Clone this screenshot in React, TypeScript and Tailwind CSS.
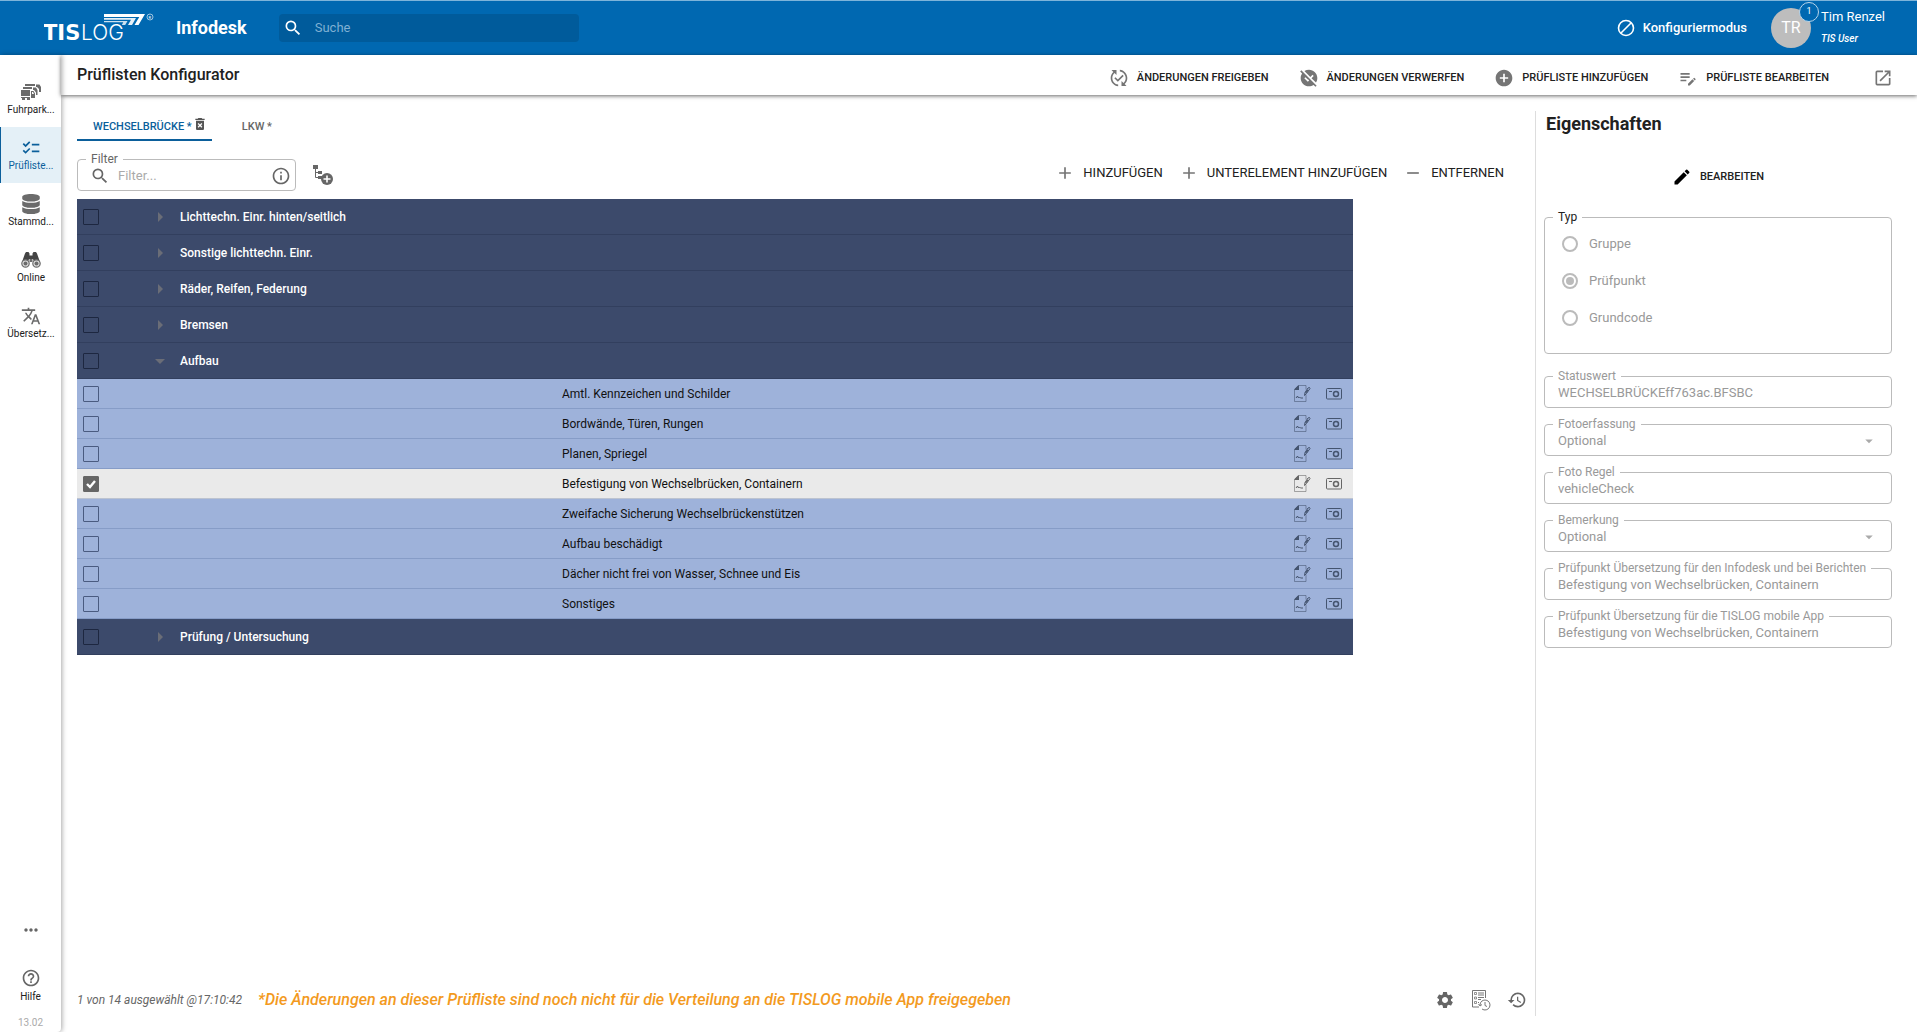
import { Fragment, useState } from 'react';
import clsx from 'clsx';
import {
  MdAdd,
  MdAddCircle,
  MdArrowDropDown,
  MdArrowRight,
  MdChecklist,
  MdDeleteForever,
  MdEdit,
  MdEditNote,
  MdHelpOutline,
  MdHistory,
  MdInfoOutline,
  MdMoreHoriz,
  MdOpenInNew,
  MdPublishedWithChanges,
  MdRemove,
  MdSearch,
  MdSettings,
  MdTranslate,
  MdUnpublished,
} from 'react-icons/md';
import { FaDatabase } from 'react-icons/fa';

const groups = [
  { name: 'Lichttechn. Einr. hinten/seitlich' },
  { name: 'Sonstige lichttechn. Einr.' },
  { name: 'Räder, Reifen, Federung' },
  { name: 'Bremsen' },
  {
    name: 'Aufbau',
    items: [
      'Amtl. Kennzeichen und Schilder',
      'Bordwände, Türen, Rungen',
      'Planen, Spriegel',
      'Befestigung von Wechselbrücken, Containern',
      'Zweifache Sicherung Wechselbrückenstützen',
      'Aufbau beschädigt',
      'Dächer nicht frei von Wasser, Schnee und Eis',
      'Sonstiges',
    ],
  },
  { name: 'Prüfung / Untersuchung' },
];

const Logo = () => (
  <svg width="112" height="32" viewBox="0 0 112 32" fill="#fff" role="img" aria-label="TISLOG">
    <text x="-1" y="28" fontFamily="DejaVu Sans, sans-serif" fontWeight="700" fontSize="21">TIS</text>
    <text x="37" y="28" fontFamily="Inter, sans-serif" fontWeight="300" fontSize="21">LOG</text>
    <path d="M60 2h41l-6.500 11h-4l4.800-8H60z" />
    <path d="M60 6h32l-4 7h-4l3-5.200H60z" opacity=".9" />
    <path d="M60 9h23.500l-2.300 4h-3.400l1.500-2.700H60z" opacity=".8" />
    <circle cx="106" cy="5" r="3" fill="none" stroke="#fff" strokeWidth=".6" />
    <text x="104.500" y="7" fontSize="4" fontFamily="Roboto, sans-serif">R</text>
  </svg>
);

const FleetIcon = () => (
  <svg width="20" height="20" viewBox="0 0 20 20" fill="currentColor">
    <path d="M4 2h10v2H4zM2 5h9v2H2zM0 8h9v6H0zM0 15h9v1H0zM1 15h3v3H1zM6 15h3v3H6z" />
    <path d="M10 9h2.500l1.500 2.500V16h-4zm1 1v2h2l-1-2zM12 5.500h3L16.500 8v5H15v-2.500L13 8h-1zM15 2.500h3.500L20 5v5h-2V7l-2-2h-1z" fillRule="evenodd" />
  </svg>
);

const BinocularsIcon = () => (
  <svg width="20" height="20" viewBox="0 0 20 20" fill="currentColor">
    <path d="M4 3.500 5 2h2.500l1 1.500v2h3v-2l1-1.500H15l1 1.500 3 8.500h-6l-1-3H8l-1 3H1z" fill="#444" />
    <circle cx="4.500" cy="13.500" r="3.700" fill="#ddd" stroke="currentColor" strokeWidth="1.200" />
    <circle cx="15.500" cy="13.500" r="3.700" fill="#ddd" stroke="currentColor" strokeWidth="1.200" />
    <circle cx="4.500" cy="13.500" r="2" />
    <circle cx="15.500" cy="13.500" r="2" />
    <path d="M8.500 9h3v3h-3z" />
  </svg>
);

const TreeAddIcon = () => (
  <svg width="22" height="22" viewBox="0 0 22 22" fill="currentColor">
    <path d="M1 1h5v4H1zM6 7h4v3H6zM6 12h4v3H6z" />
    <path d="M3.500 5v8.500H7M3.500 8.500H7" fill="none" stroke="currentColor" />
    <circle cx="15" cy="15" r="6" />
    <path d="M15 11.500v7M11.500 15h7" stroke="#fff" strokeWidth="1.600" />
  </svg>
);

const NoteIcon = () => (
  <svg width="17" height="17" viewBox="0 0 17 17" fill="none" stroke="currentColor">
    <path d="M12 9.500v7H.500v-12L4.500.500H12v4" strokeWidth=".8" opacity=".7" />
    <path d="M.500 5V4L4 .500h1V5z" fill="currentColor" stroke="none" />
    <path d="m2 13 1.500-2 1 2 1-1 1 1H9" strokeWidth="1" />
    <path d="m10.500 10.500.5-3L14 3l1.500-.5.5 1-3.500 5z" strokeWidth="1" />
    <path d="m11.500 8 2.500-3" strokeWidth="1.200" />
  </svg>
);

const PhotoIcon = () => (
  <svg width="16" height="12" viewBox="0 0 16 12" fill="none" stroke="currentColor">
    <rect x=".500" y=".500" width="15" height="10.500" rx="1" />
    <circle cx="10" cy="6" r="2.500" strokeWidth="1.500" />
    <path d="M3 3.500h3" />
  </svg>
);

const ReportHistoryIcon = () => (
  <svg width="20" height="22" viewBox="0 0 20 22" fill="none" stroke="currentColor" strokeWidth=".9">
    <path d="M8 18H1.500V1.500h13V9" />
    <path d="M3.500 3.500h2v2h-2zM3.500 8h2v2h-2zM3.500 12.500h2v2h-2z" strokeWidth=".7" />
    <path d="M7 4h6M7 6h6M7 8.500h6M7 10.500h3M7 13.500h1" />
    <path d="M9 16a5 5 0 1 1 2 4M7.500 15 9 17l2-1.500" />
    <path d="M14 13v3.500l2 1" />
  </svg>
);

const BlockIcon = () => (
  <svg width="18" height="18" viewBox="0 0 18 18" fill="none" stroke="#fff" strokeWidth="1.600">
    <circle cx="9" cy="9" r="7.500" />
    <path d="M4 14 14 4" />
  </svg>
);

const navItems = [
  { label: 'Fuhrpark...', icon: <FleetIcon /> },
  { label: 'Prüfliste...', icon: <MdChecklist size={20} />, active: true },
  { label: 'Stammd...', icon: <FaDatabase size={20} /> },
  { label: 'Online', icon: <BinocularsIcon /> },
  { label: 'Übersetz...', icon: <MdTranslate size={20} /> },
];

const actions = [
  { label: 'ÄNDERUNGEN FREIGEBEN', icon: <MdPublishedWithChanges size={20} /> },
  { label: 'ÄNDERUNGEN VERWERFEN', icon: <MdUnpublished size={20} /> },
  { label: 'PRÜFLISTE HINZUFÜGEN', icon: <MdAddCircle size={20} /> },
  { label: 'PRÜFLISTE BEARBEITEN', icon: <MdEditNote size={20} /> },
];

const fields = [
  { id: 'status', label: 'Statuswert', value: 'WECHSELBRÜCKEff763ac.BFSBC' },
  { id: 'photo', label: 'Fotoerfassung', value: 'Optional', select: true },
  { id: 'rule', label: 'Foto Regel', value: 'vehicleCheck' },
  { id: 'remark', label: 'Bemerkung', value: 'Optional', select: true },
  { id: 'infodesk', label: 'Prüfpunkt Übersetzung für den Infodesk und bei Berichten', value: 'Befestigung von Wechselbrücken, Containern' },
  { id: 'mobile', label: 'Prüfpunkt Übersetzung für die TISLOG mobile App', value: 'Befestigung von Wechselbrücken, Containern' },
];

function Checkbox({ label, checked, onChange, dark }: { label: string; checked: boolean; onChange: () => void; dark?: boolean }) {
  return (
    <span className="grid size-4">
      <input
        type="checkbox"
        aria-label={label}
        checked={checked}
        onChange={onChange}
        className={clsx(
          'peer col-start-1 row-start-1 size-4 appearance-none rounded-[1px] border checked:border-[#666] checked:bg-[#666]',
          dark ? 'border-[#1d2740]' : 'border-[#4a5b80]'
        )}
      />
      <svg viewBox="0 0 16 16" className="pointer-events-none invisible col-start-1 row-start-1 size-4 peer-checked:visible">
        <path d="m4 8 3 3 5-6" fill="none" stroke="#fff" strokeWidth="2.400" />
      </svg>
    </span>
  );
}

export default function App() {
  const [checked, setChecked] = useState<string[]>(['Befestigung von Wechselbrücken, Containern']);

  const toggle = (name: string) =>
    setChecked(prev => (prev.includes(name) ? prev.filter(n => n !== name) : [...prev, name]));

  return (
    <div className="flex min-h-screen flex-col bg-white font-[Roboto,sans-serif] text-[13px] text-[#212121]">
      <header className="flex h-[55px] items-center border-t border-[#7db4da] bg-[#0068b1] pr-8 pl-11 text-white">
        <Logo />
        <h1 className="ml-5 text-lg font-bold">Infodesk</h1>
        <label className="ml-8 flex h-7 w-[300px] items-center gap-3 rounded bg-[#005b9b] px-1">
          <MdSearch size={20} className="shrink-0" />
          <input type="search" placeholder="Suche" aria-label="Suche" className="w-full bg-transparent outline-none placeholder:text-[#7fb0d3]" />
        </label>
        <button className="ml-auto flex items-center gap-2 font-medium">
          <BlockIcon />
          Konfiguriermodus
        </button>
        <div className="relative ml-6 grid size-10 place-items-center rounded-full bg-[#bdbdbd] text-base">
          TR
          <span className="absolute -top-1.5 -right-2 grid size-5 place-items-center rounded-full border border-[#b8d5ea] bg-[#0068b1] text-[9px]">1</span>
        </div>
        <div className="ml-2.5">
          <div className="leading-[22px]">Tim Renzel</div>
          <div className="text-[10px] leading-[22px] font-medium italic">TIS User</div>
        </div>
      </header>

      <div className="flex flex-1">
        <nav className="z-10 flex w-[61px] shrink-0 flex-col rounded-br pt-4 text-[10px] leading-[14px] shadow-[1px_0_5px_rgba(0,0,0,0.35)]">
          {navItems.map(item => (
            <a
              key={item.label}
              href="#"
              className={clsx(
                'flex h-14 flex-col items-center gap-px border-l pt-[11px]',
                item.active ? 'border-[#0b5f9b] bg-[#e4f0f7] text-[#0b5f9b]' : 'border-transparent'
              )}
            >
              <span className={item.active ? '' : 'text-[#6b6b6b]'}>{item.icon}</span>
              {item.label}
            </a>
          ))}
          <button className="mx-auto mt-auto text-[#666]" aria-label="Mehr">
            <MdMoreHoriz size={20} />
          </button>
          <a href="#" className="mt-7 flex flex-col items-center gap-0.5">
            <MdHelpOutline size={20} className="text-[#666]" />
            Hilfe
          </a>
          <span className="mt-3 pb-0.5 text-center text-[#aaa]">13.02</span>
        </nav>

        <div className="flex min-w-0 flex-1 flex-col">
          <div className="flex h-10 items-center pr-6 pl-4 shadow-[0_1px_4px_rgba(0,0,0,0.6)]">
            <h2 className="text-base font-medium">Prüflisten Konfigurator</h2>
            <div className="ml-auto flex items-center gap-[30px] pt-1.5">
              {actions.map(action => (
                <button key={action.label} className="flex items-center gap-2 text-[11px] font-medium">
                  <span className="text-[#757575]">{action.icon}</span>
                  {action.label}
                </button>
              ))}
              <button className="ml-3.5 text-[#757575]" aria-label="In neuem Fenster öffnen">
                <MdOpenInNew size={20} />
              </button>
            </div>
          </div>

          <div className="flex flex-1 pt-4 pb-4">
            <main className="flex min-w-0 flex-1 flex-col pl-4">
              <div className="flex h-[30px] gap-3.5 text-[11px] font-medium">
                <button className="flex items-center border-b-2 border-[#0b5f9b] pt-1 pr-1 pl-4 text-[#0b5f9b]">
                  WECHSELBRÜCKE *
                  <MdDeleteForever size={16} className="mb-1.5 text-[#555]" />
                </button>
                <button className="px-4 pt-0.5 text-[#666]">LKW *</button>
              </div>

              <div className="mt-2.5 flex items-center pr-[31px]">
                <fieldset className="w-[219px] rounded border border-[#bbb] pl-2">
                  <legend className="px-[5px] text-xs leading-4 text-[#666]">
                    <label htmlFor="filter">Filter</label>
                  </legend>
                  <div className="flex h-[23px] items-center gap-2 pr-1 pb-1.5 pl-1">
                    <MdSearch size={20} className="shrink-0 text-[#666]" />
                    <input id="filter" placeholder="Filter..." className="w-full min-w-0 outline-none placeholder:text-[#aaa]" />
                    <MdInfoOutline size={20} className="shrink-0 text-[#666]" />
                  </div>
                </fieldset>
                <button className="ml-4 pt-2 text-[#666]" aria-label="Baum erweitern">
                  <TreeAddIcon />
                </button>
                <div className="ml-auto flex gap-4 pt-1">
                  <button className="flex items-center gap-2">
                    <MdAdd size={20} className="text-[#757575]" />
                    HINZUFÜGEN
                  </button>
                  <button className="flex items-center gap-2">
                    <MdAdd size={20} className="text-[#757575]" />
                    UNTERELEMENT HINZUFÜGEN
                  </button>
                  <button className="flex items-center gap-2">
                    <MdRemove size={20} className="text-[#757575]" />
                    ENTFERNEN
                  </button>
                </div>
              </div>

              <div className="mt-2 pr-[182px]">
                <table className="w-full table-fixed border-separate border-spacing-0 text-xs">
                  <colgroup>
                    <col className="w-[58px]" />
                    <col className="w-[45px]" />
                    <col className="w-[382px]" />
                    <col />
                    <col className="w-[70px]" />
                  </colgroup>
                  <tbody>
                    {groups.map(group => (
                      <Fragment key={group.name}>
                        <tr className="h-9 bg-[#3c4a6b] font-medium text-white [&>td]:border-b [&>td]:border-[#323f5e]">
                          <td className="pl-1.5">
                            <Checkbox dark label={group.name} checked={checked.includes(group.name)} onChange={() => toggle(group.name)} />
                          </td>
                          <td className="pl-[13px] text-[#6a6d77]">
                            {group.items ? <MdArrowDropDown size={24} /> : <MdArrowRight size={24} />}
                          </td>
                          <td colSpan={3}>{group.name}</td>
                        </tr>
                        {group.items?.map(item => (
                          <tr
                            key={item}
                            className={clsx(
                              'h-[30px] [&>td]:border-b',
                              checked.includes(item)
                                ? 'bg-[#eaeaea] text-[#666] [&>td]:border-[#bcc3d0]'
                                : 'bg-[#9eb2da] text-[#44546f] [&>td]:border-[#869cc7]'
                            )}
                          >
                            <td className="pl-1.5">
                              <Checkbox label={item} checked={checked.includes(item)} onChange={() => toggle(item)} />
                            </td>
                            <td />
                            <td />
                            <td className="text-[#111]">{item}</td>
                            <td>
                              <div className="flex items-center justify-end gap-[15px] pr-[11px]">
                                <NoteIcon />
                                <PhotoIcon />
                              </div>
                            </td>
                          </tr>
                        ))}
                      </Fragment>
                    ))}
                  </tbody>
                </table>
              </div>

              <footer className="mt-auto flex h-8 items-center pr-2 text-[#666]">
                <span className="text-xs italic">1 von 14 ausgewählt @17:10:42</span>
                <strong className="ml-4 text-base font-medium text-[#f39a1e] italic">
                  *Die Änderungen an dieser Prüfliste sind noch nicht für die Verteilung an die TISLOG mobile App freigegeben
                </strong>
                <div className="ml-auto flex items-center gap-4">
                  <button aria-label="Einstellungen"><MdSettings size={20} /></button>
                  <button aria-label="Berichte"><ReportHistoryIcon /></button>
                  <button aria-label="Verlauf"><MdHistory size={20} /></button>
                </div>
              </footer>
            </main>

            <aside className="w-[382px] shrink-0 border-l border-[#ddd] pr-[25px] pl-2">
              <h3 className="pl-0.5 text-lg leading-[26px] font-bold">Eigenschaften</h3>
              <button className="mx-auto mt-6 flex h-8 items-center gap-2 text-[11px] font-medium">
                <MdEdit size={20} className="text-black" />
                BEARBEITEN
              </button>

              <fieldset className="mt-4 rounded border border-[#bbb] pb-[17px] pl-2">
                <legend className="px-[5px] text-xs leading-4">Typ</legend>
                {['Gruppe', 'Prüfpunkt', 'Grundcode'].map(type => (
                  <label key={type} className="flex h-[37px] items-center gap-[11px] pl-[9px] text-[#999]">
                    <input
                      type="radio"
                      name="type"
                      disabled
                      defaultChecked={type === 'Prüfpunkt'}
                      className="size-4 appearance-none rounded-full border-2 border-[#bbb] bg-clip-content p-0.5 checked:bg-[#bbb]"
                    />
                    {type}
                  </label>
                ))}
              </fieldset>

              <div className="mt-3.5 flex flex-col gap-2 text-[#999]">
                {fields.map(field => (
                  <fieldset key={field.id} className="min-w-0 rounded border border-[#bbb] pb-[5px] pl-2">
                    <legend className="px-[5px] text-xs leading-4 whitespace-nowrap">
                      <label htmlFor={field.id}>{field.label}</label>
                    </legend>
                    {field.select ? (
                      <div className="flex h-[18px] items-center pr-[13px] pl-[5px]">
                        <select id={field.id} disabled className="h-[18px] flex-1 appearance-none leading-[18px] opacity-100">
                          <option>{field.value}</option>
                        </select>
                        <MdArrowDropDown size={18} className="text-[#aaa]" />
                      </div>
                    ) : (
                      <input id={field.id} disabled value={field.value} className="block h-[18px] w-full pl-[5px] leading-[18px]" />
                    )}
                  </fieldset>
                ))}
              </div>
            </aside>
          </div>
        </div>
      </div>
    </div>
  );
}
